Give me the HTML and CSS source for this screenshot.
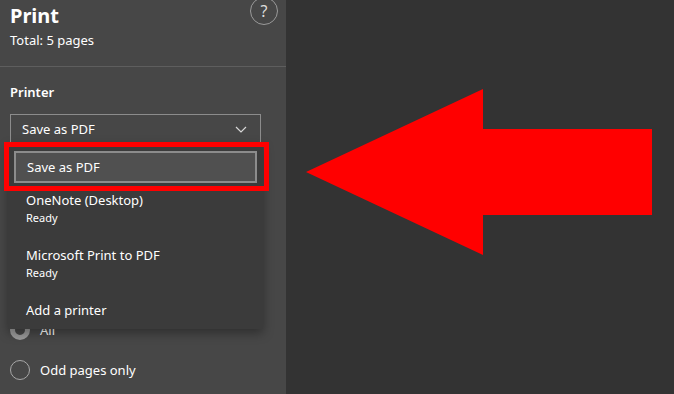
FILE: index.html
```html
<!DOCTYPE html>
<html lang="en">
<head>
    <meta charset="UTF-8">
    <meta name="viewport" content="width=device-width, initial-scale=1.0">
    <title>Print</title>
    <link rel="stylesheet" href="styles.css">
</head>
<body>

    <!-- Print settings panel -->
    <aside class="panel">
        <div class="panel-head">
            <div>
                <h1>Print</h1>
                <p class="total">Total: 5 pages</p>
            </div>
            <span class="help">?</span>
        </div>

        <div class="section">
            <h2>Printer</h2>
            <div class="select">
                <span>Save as PDF</span>
                <svg class="chevron" width="12" height="7" viewBox="0 0 12 7"><path d="M1 1 L6 6 L11 1" fill="none" stroke="#d8d8d8" stroke-width="1.2"/></svg>
            </div>

            <!-- open dropdown -->
            <ul class="menu">
                <li class="item selected">Save as PDF</li>
                <li class="item">OneNote (Desktop)<small>Ready</small></li>
                <li class="item">Microsoft Print to PDF<small>Ready</small></li>
                <li class="item">Add a printer</li>
            </ul>
            <div class="mark"></div>
        </div>

        <div class="radios">
            <label class="radio checked"><span class="dot"></span>All</label>
            <label class="radio"><span class="dot"></span>Odd pages only</label>
        </div>
    </aside>

    <!-- Preview area with annotation arrow -->
    <main class="preview">
        <svg class="arrow" width="346" height="166" viewBox="0 0 346 166">
            <polygon points="0,83 177,0 177,40 346,40 346,126 177,126 177,166" fill="#ff0000"/>
        </svg>
    </main>

</body>
</html>
```

FILE: styles.css
```css
* {
    margin: 0;
    padding: 0;
    box-sizing: border-box;
}

body {
    font-family: 'Segoe UI', 'Noto Sans', sans-serif;
    background-color: #333333;
    color: #ffffff;
    display: flex;
    width: 674px;
    height: 394px;
    overflow: hidden;
}

.panel {
    width: 286px;
    background-color: #474747;
    flex-shrink: 0;
}

.panel-head {
    display: flex;
    justify-content: space-between;
    padding: 0 8px 0 10px;
    height: 67px;
    border-bottom: 1px solid #5e5e5e;
}

h1 {
    font-size: 20px;
    font-weight: 700;
    line-height: 26px;
    margin-top: 3px;
}

.total {
    font-size: 13px;
    line-height: 18px;
    margin-top: 2px;
}

.help {
    width: 28px;
    height: 28px;
    margin-top: -3px;
    border: 1px solid #9a9a9a;
    border-radius: 50%;
    display: flex;
    justify-content: center;
    align-items: center;
    font-size: 16px;
    color: #dddddd;
}

.section {
    position: relative;
    padding: 15px 25px 0 10px;
}

h2 {
    font-size: 13px;
    font-weight: 600;
    line-height: 20px;
    margin-bottom: 12px;
}

.select {
    height: 30px;
    border: 1px solid #8c8c8c;
    display: flex;
    justify-content: space-between;
    align-items: center;
    padding: 0 13px 0 11px;
    font-size: 13px;
}

/* dropdown list, lies over the page settings */
.menu {
    position: absolute;
    left: 8px;
    top: 76px;
    width: 255px;
    list-style: none;
    background-color: #3b3b3b;
    box-shadow: 0 4px 10px rgba(0, 0, 0, 0.35);
    padding: 6px 0 0;
    z-index: 2;
}

.item {
    font-size: 13px;
    line-height: 18px;
    padding: 4px 18px 15px;
}

.item:last-child {
    padding-bottom: 10px;
}

.item small {
    display: block;
    font-size: 11px;
    line-height: 18px;
}

.item.selected {
    margin: 2px 6px 4px;
    padding: 5px 11px;
    background-color: #505050;
    border: 2px solid #8c8c8c;
}

.mark {
    position: absolute;
    left: 4px;
    top: 75px;
    width: 265px;
    height: 49px;
    border: 5px solid #ff0000;
    z-index: 3;
}

.radios {
    padding: 176px 10px 0;
}

.radio {
    display: flex;
    align-items: center;
    gap: 10px;
    font-size: 13px;
    height: 20px;
    margin-bottom: 20px;
}

.dot {
    width: 20px;
    height: 20px;
    border-radius: 50%;
    border: 1px solid #a8a8a8;
}

.radio.checked .dot {
    border: 5px solid #9a9a9a;
}

.preview {
    flex: 1;
    padding: 89px 0 0 20px;
}

.arrow {
    display: block;
}
```
